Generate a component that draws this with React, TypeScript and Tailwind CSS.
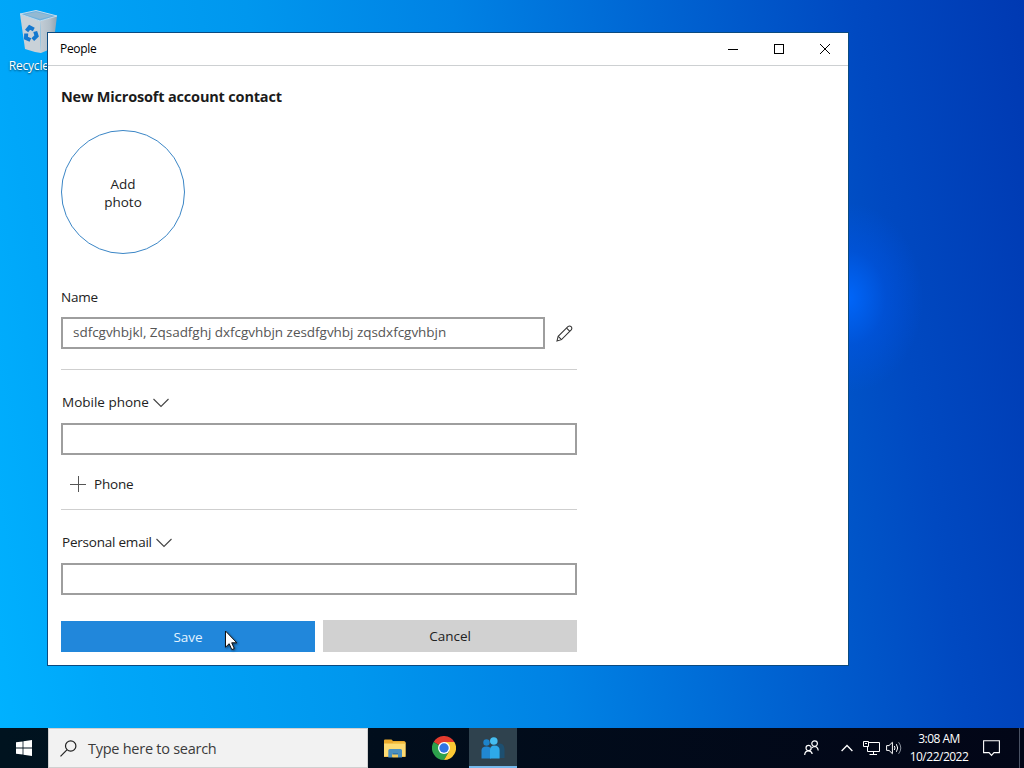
import { type ReactNode } from 'react'
import { clsx } from 'clsx'

interface FieldProps {
  label: string
  className?: string
  labelClassName?: string
  children?: ReactNode
}

function RecycleBinIcon() {
  return (
    <svg width="40" height="44" viewBox="0 0 40 44" className="block">
      <defs>
        <linearGradient id="bin" x1="0" y1="0" x2="1" y2="0">
          <stop offset="0" stopColor="#c3cdd6" />
          <stop offset="0.55" stopColor="#b3c0ca" />
          <stop offset="1" stopColor="#8fa3b2" />
        </linearGradient>
      </defs>
      <path d="M1 4 L21 11 L22 43 L16 42 L6 39 Z" fill="#c9d1d8" />
      <path d="M21 11 L38 6 L34 38 L22 43 Z" fill="url(#bin)" />
      <path d="M1 4 L17 0.5 L38 6 L21 11 Z" fill="#6fb0dc" stroke="#c4dcec" strokeWidth="1" />
      <path d="M6 4.5 L17 2 L33 6 L21 9 Z" fill="#93b9d2" />
      <g fill="none" stroke="#1478cf" strokeWidth="4">
        <path d="M7.6 21 L10.6 17.2 L14.8 19.4" />
        <path d="M16.2 21.5 L17.6 26 L13.8 29.6" />
        <path d="M11.4 30 L7 28 L7.2 23.5" />
      </g>
    </svg>
  )
}

function PencilIcon() {
  return (
    <svg width="17" height="17" viewBox="0 0 18 18" fill="none" stroke="#333" strokeWidth="1.1">
      <path d="M1 17 L2.3 12 L12.6 1.7 Q14.5 0.3 16 1.8 Q17.5 3.4 16.1 5.2 L5.8 15.5 Z" />
      <path d="M11.2 3.2 L14.7 6.7 M2.4 12 L5.8 15.4" />
    </svg>
  )
}

function ChevronDown() {
  return (
    <svg width="16" height="10" viewBox="0 0 16 10" fill="none" stroke="#444" strokeWidth="1.1" className="mt-[2px]">
      <path d="M0.5 1 L8 8.5 L15.5 1" />
    </svg>
  )
}

function Cursor() {
  return (
    <svg width="16" height="22" viewBox="0 0 16 22" className="absolute left-[176px] top-[597px] drop-shadow-[1px_1px_1px_rgba(0,0,0,0.5)]">
      <path d="M1.5 1 V17.2 L5.2 13.7 L7.8 19.6 L10.3 18.5 L7.7 12.8 H12.8 Z" fill="#fff" stroke="#111" strokeWidth="1" />
    </svg>
  )
}

function FolderIcon() {
  return (
    <svg width="22" height="19" viewBox="0 0 22 19">
      <path d="M0 1.5 Q0 0.5 1 0.5 H7.5 L9 2 H20 Q21.5 2 21.5 3.5 V18 H0 Z" fill="#eaa92c" />
      <path d="M0 4.5 H21.5 V17.5 H0 Z" fill="#fddb73" />
      <path d="M9 3.3 H21.5 V5 H9 Z" fill="#f5c54a" />
      <path d="M4.3 18.5 V11.5 Q4.3 10 5.8 10 H16.5 Q18 10 18 11.5 V18.5 H14 V14 H8.3 V18.5 Z" fill="#4a8fc0" />
      <path d="M8.3 14 H14 V18.5 H8.3 Z" fill="#f0c95e" />
      <path d="M8.3 14 H14 V15.5 H8.3 Z" fill="#2e78b4" />
    </svg>
  )
}

function ChromeIcon() {
  return (
    <svg width="24" height="24" viewBox="0 0 48 48">
      <path d="M24 24 L3.2 12 A24 24 0 0 1 44.8 12 Z" fill="#e33b2e" />
      <path d="M24 24 L3.2 12 A24 24 0 0 0 24 48 L34.4 30 Z" fill="#2da14c" />
      <path d="M24 12 H44.8 A24 24 0 0 1 24 48 L34.4 30 Z" fill="#fcc934" />
      <circle cx="24" cy="24" r="12" fill="#fff" />
      <circle cx="24" cy="24" r="9.4" fill="#2f74e4" />
    </svg>
  )
}

function PeopleAppIcon() {
  return (
    <svg width="24" height="22" viewBox="0 0 24 22" className="mt-px">
      <path d="M15 7 Q23 5 23.5 12 V21 H15 Z" fill="#1d4f70" />
      <circle cx="5.5" cy="5.5" r="3.2" fill="#1d83cb" />
      <path d="M0.5 21.5 V13.5 Q0.5 9.5 5.5 9.5 Q10 9.5 10 13.5 V21.5 Z" fill="#2187d2" />
      <circle cx="12.8" cy="4" r="3.8" fill="#45bdf0" />
      <path d="M9 21.5 V13 Q9 8.5 13.2 8.5 Q18.6 8.5 18.6 13 V21.5 Z" fill="#2ea9e8" />
    </svg>
  )
}

function TitleBar() {
  return (
    <div className="flex h-[33px] items-center justify-between border-b border-[#cdd0d2] pl-3 text-black">
      <span className="pb-px text-[12px] tracking-[-0.3px]">People</span>
      <div className="flex h-full">
        <button className="flex w-[46px] items-center justify-center" aria-label="Minimize">
          <svg width="11" height="11" viewBox="0 0 11 11" stroke="currentColor">
            <path d="M0 5.5 H10" />
          </svg>
        </button>
        <button className="flex w-[46px] items-center justify-center" aria-label="Maximize">
          <svg width="11" height="11" viewBox="0 0 11 11" stroke="currentColor" fill="none">
            <rect x="0.5" y="0.5" width="9" height="9" />
          </svg>
        </button>
        <button className="flex w-[46px] items-center justify-center" aria-label="Close">
          <svg width="11" height="11" viewBox="0 0 11 11" stroke="currentColor">
            <path d="M0 0 L10 10 M10 0 L0 10" />
          </svg>
        </button>
      </div>
    </div>
  )
}

function DropdownField({ label, className, labelClassName, children }: FieldProps) {
  return (
    <div className={clsx('flex flex-col', className)}>
      <button className="flex h-5 items-center gap-1 pl-px">
        <span className={labelClassName}>{label}</span>
        <ChevronDown />
      </button>
      <div className="mt-[11px] h-8 border-2 border-[#9e9e9e] bg-white" />
      {children}
    </div>
  )
}

function ContactForm() {
  return (
    <div className="flex w-[529px] flex-col pl-[13px] text-[13.5px] leading-[18px] text-[#222]">
      <h1 className="mt-[21px] text-[14.5px] font-bold leading-5 tracking-[-0.18px] text-[#1b1b1b]">
        New Microsoft account contact
      </h1>
      <button className="mt-[23px] flex size-[124px] items-center justify-center rounded-full border border-[#3b86c6] pt-[2px] text-center">
        <span className="w-12">Add photo</span>
      </button>
      <label className="mt-[34px] leading-[18px] tracking-[-0.2px]">Name</label>
      <div className="mt-[11px] flex items-center">
        <div className="flex h-8 w-[484px] items-center border-2 border-[#9e9e9e] pb-[3px] pl-[10px] tracking-[-0.03px] text-[#555]">
          sdfcgvhbjkl, Zqsadfghj dxfcgvhbjn zesdfgvhbj zqsdxfcgvhbjn
        </div>
        <button className="ml-[11px]" aria-label="Edit name">
          <PencilIcon />
        </button>
      </div>
      <hr className="mt-5 border-[#cfcfcf]" />
      <DropdownField label="Mobile phone" className="mt-[22px]">
        <button className="mt-5 flex h-[18px] items-center gap-[8px] pl-[9px]">
          <svg width="16" height="16" viewBox="0 0 16 16" stroke="#555">
            <path d="M8.5 0 V16 M0 8.5 H16" />
          </svg>
          <span className="tracking-[-0.2px]">Phone</span>
        </button>
      </DropdownField>
      <hr className="mt-4 border-[#cfcfcf]" />
      <DropdownField label="Personal email" className="mt-[22px]" labelClassName="tracking-[-0.22px]" />
      <div className="mt-[25px] flex gap-2">
        <button className="mt-px h-[31px] flex-1 bg-[#2187db] pt-px text-[#e3f3ff]">Save</button>
        <button className="h-8 flex-1 bg-[#d1d1d1]">Cancel</button>
      </div>
    </div>
  )
}

function Taskbar() {
  return (
    <footer className="flex h-10 items-stretch bg-[#010d1c] bg-linear-to-r from-[#00131f] to-[#020617] text-white">
      <button className="flex w-12 items-center justify-center" aria-label="Start">
        <svg width="16" height="16" viewBox="0 0 16 16" fill="#fff">
          <path d="M0 2.3 L6.6 1.4 V7.5 H0 Z M7.4 1.2 L16 0 V7.5 H7.4 Z M0 8.4 H6.6 V14.6 L0 13.7 Z M7.4 8.4 H16 V16 L7.4 14.8 Z" />
        </svg>
      </button>
      <div className="flex w-80 items-center gap-[11px] border border-[#d0d0d0] bg-[#f2f2f2] pl-[11px] text-[#3b3b3b]">
        <svg width="17" height="17" viewBox="0 0 17 17" fill="none" stroke="#222" strokeWidth="1.2">
          <circle cx="10.7" cy="6" r="5.2" />
          <path d="M6.9 9.8 L0.5 16.3" />
        </svg>
        <span className="pt-[2px] text-[14.5px] tracking-[-0.26px]">Type here to search</span>
      </div>
      <div className="flex pl-[2px]">
        <div className="flex w-[49px] items-center justify-center">
          <FolderIcon />
        </div>
        <div className="flex w-[50px] items-center justify-center">
          <ChromeIcon />
        </div>
        <div className="flex w-12 items-center justify-center border-b-2 border-[#76b9ed] bg-[#2f424e]">
          <PeopleAppIcon />
        </div>
      </div>
      <div className="ml-auto flex items-center">
        <svg width="15" height="16" viewBox="0 0 15 16" fill="none" stroke="#fff" strokeWidth="1.2">
          <circle cx="10.6" cy="3.6" r="2.8" />
          <circle cx="4.6" cy="8" r="2.6" />
          <path d="M0.7 15 Q0.8 10.8 4.6 10.8 Q7.6 10.8 8.2 14 M8 8 Q9.2 6.5 10.6 6.5 Q13.8 6.6 14.2 10.5" />
        </svg>
        <svg width="12" height="8" viewBox="0 0 12 8" fill="none" stroke="#fff" strokeWidth="1.3" className="ml-[22px]">
          <path d="M0.6 7 L6 1.5 L11.4 7" />
        </svg>
        <svg width="17" height="15" viewBox="0 0 17 15" fill="none" stroke="#fff" className="ml-[10px]">
          <path d="M6 1.5 H16.5 V10.5 H4.5 V6 M10.5 10.5 V13.5 M6.5 13.5 H14" />
          <path d="M0.5 0.5 H5.5 V5.5 H0.5 Z M2 2.5 H4" />
        </svg>
        <svg width="16" height="14" viewBox="0 0 16 14" fill="none" stroke="#fff" className="ml-[6px]">
          <path d="M0.6 4.6 H3 L6.4 1.3 V12.7 L3 9.4 H0.6 Z" />
          <path d="M8.3 5 Q9.7 7 8.3 9 M10.4 3.2 Q13 7 10.4 10.8" />
          <path d="M12.6 1.2 Q17 7 12.6 12.8" stroke="#8a919c" />
        </svg>
        <div className="ml-[7px] flex w-[60px] flex-col items-center text-[12px] leading-[18px] tracking-[-0.5px]">
          <span>3:08 AM</span>
          <span>10/22/2022</span>
        </div>
        <svg width="17" height="17" viewBox="0 0 17 17" fill="none" stroke="#fff" strokeWidth="1.1" className="ml-[14px]">
          <path d="M0.6 0.8 H16.4 V12.6 H11 L8.5 15.4 L6 12.6 H0.6 Z" />
        </svg>
        <div className="ml-[19px] h-10 w-[5px] border-l border-[#4a5264]" />
      </div>
    </footer>
  )
}

export default function App() {
  return (
    <div className="relative flex h-screen w-screen flex-col overflow-hidden font-['Open_Sans',sans-serif] bg-[radial-gradient(ellipse_75px_95px_at_848px_298px,rgba(0,104,255,0.9),rgba(0,90,245,0.35)_50%,rgba(0,80,220,0)),linear-gradient(81deg,#00b2ff_0%,#00a7f9_10%,#0097ee_32%,#0082e4_50%,#0064d2_68%,#0049c1_85%,#0039b2_100%)]">
      <main className="flex-1">
        <div className="flex w-[78px] flex-col items-center pt-[10px] text-[12px] text-white">
          <RecycleBinIcon />
          <span className="mt-[3px] whitespace-nowrap tracking-[-0.2px] [text-shadow:0_1px_2px_rgba(0,0,0,0.6)]">
            Recycle Bin
          </span>
        </div>
      </main>
      <section className="absolute left-[48px] top-[33px] h-[632px] w-[800px] bg-white shadow-[0_0_0_1px_#0b4a80]">
        <TitleBar />
        <ContactForm />
        <Cursor />
      </section>
      <Taskbar />
    </div>
  )
}
